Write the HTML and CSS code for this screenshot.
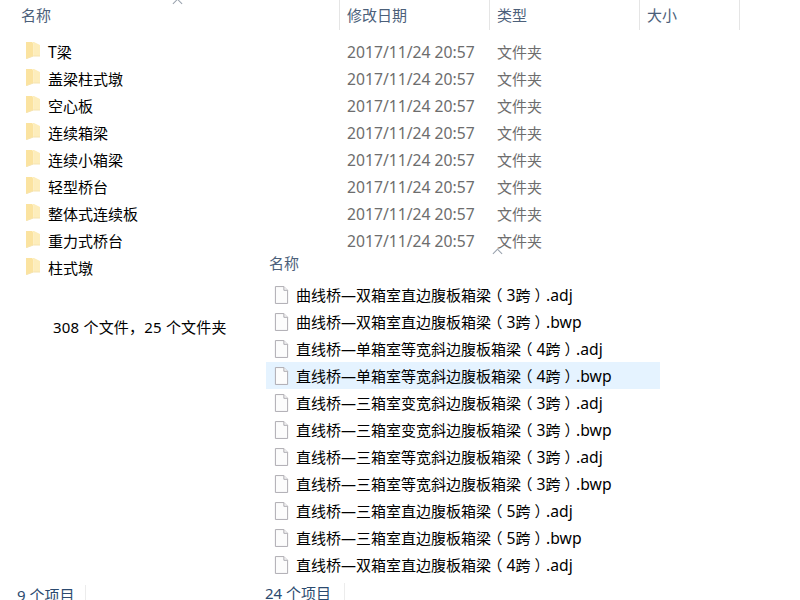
FILE: index.html
```html
<!DOCTYPE html>
<html lang="zh-CN">
<head>
    <meta charset="UTF-8">
    <title>文件夹</title>
    <link rel="stylesheet" href="styles.css">
</head>
<body>
    <svg class="defs" width="0" height="0">
        <symbol id="folder" viewBox="0 0 14 18">
            <path d="M0 0h6l1.500 2v12L0 17z" fill="#fbe3a0"/>
            <path d="M6 0h2l6 3v11H7.500V2z" fill="#fdedbb"/>
            <path d="M.5 16.500l7-2.500H14" fill="none" stroke="#f5e3b0"/>
        </symbol>
        <symbol id="file" viewBox="0 0 16 19">
            <path d="M1.500.500h9l4 4v14h-13z" fill="#fcfcfc" stroke="#aaa7ae"/>
            <path d="M10.500.500v4h4" fill="#f4f4f4" stroke="#aaa7ae"/>
        </symbol>
    </svg>

    <!-- ventana de atras -->
    <div class="window back">
        <div class="col-head">
            <span class="c-name">名称</span>
            <span class="c-date">修改日期</span>
            <span class="c-type">类型</span>
            <span class="c-size">大小</span>
        </div>
        <div class="sort-arrow back-arrow"></div>
        <ul class="folders">
            <li><svg class="ico-folder"><use href="#folder"/></svg><span class="c-label"><span class="latin">T</span>梁</span><span class="c-date">2017/11/24 20:57</span><span class="c-type">文件夹</span></li>
            <li><svg class="ico-folder"><use href="#folder"/></svg><span class="c-label">盖梁柱式墩</span><span class="c-date">2017/11/24 20:57</span><span class="c-type">文件夹</span></li>
            <li><svg class="ico-folder"><use href="#folder"/></svg><span class="c-label">空心板</span><span class="c-date">2017/11/24 20:57</span><span class="c-type">文件夹</span></li>
            <li><svg class="ico-folder"><use href="#folder"/></svg><span class="c-label">连续箱梁</span><span class="c-date">2017/11/24 20:57</span><span class="c-type">文件夹</span></li>
            <li><svg class="ico-folder"><use href="#folder"/></svg><span class="c-label">连续小箱梁</span><span class="c-date">2017/11/24 20:57</span><span class="c-type">文件夹</span></li>
            <li><svg class="ico-folder"><use href="#folder"/></svg><span class="c-label">轻型桥台</span><span class="c-date">2017/11/24 20:57</span><span class="c-type">文件夹</span></li>
            <li><svg class="ico-folder"><use href="#folder"/></svg><span class="c-label">整体式连续板</span><span class="c-date">2017/11/24 20:57</span><span class="c-type">文件夹</span></li>
            <li><svg class="ico-folder"><use href="#folder"/></svg><span class="c-label">重力式桥台</span><span class="c-date">2017/11/24 20:57</span><span class="c-type">文件夹</span></li>
            <li><svg class="ico-folder"><use href="#folder"/></svg><span class="c-label">柱式墩</span></li>
        </ul>
        <p class="summary">308 个文件，25 个文件夹</p>
        <div class="status">9 个项目</div>
    </div>

    <!-- ventana de adelante -->
    <div class="window front">
        <div class="front-head">名称</div>
        <ul class="files">
            <li><svg class="ico-file"><use href="#file"/></svg>曲线桥—双箱室直边腹板箱梁<span class="paren">（</span><span class="latin">3</span>跨<span class="paren">）</span><span class="latin">.adj</span></li>
            <li><svg class="ico-file"><use href="#file"/></svg>曲线桥—双箱室直边腹板箱梁<span class="paren">（</span><span class="latin">3</span>跨<span class="paren">）</span><span class="latin">.bwp</span></li>
            <li><svg class="ico-file"><use href="#file"/></svg>直线桥—单箱室等宽斜边腹板箱梁<span class="paren">（</span><span class="latin">4</span>跨<span class="paren">）</span><span class="latin">.adj</span></li>
            <li class="selected"><svg class="ico-file"><use href="#file"/></svg>直线桥—单箱室等宽斜边腹板箱梁<span class="paren">（</span><span class="latin">4</span>跨<span class="paren">）</span><span class="latin">.bwp</span></li>
            <li><svg class="ico-file"><use href="#file"/></svg>直线桥—三箱室变宽斜边腹板箱梁<span class="paren">（</span><span class="latin">3</span>跨<span class="paren">）</span><span class="latin">.adj</span></li>
            <li><svg class="ico-file"><use href="#file"/></svg>直线桥—三箱室变宽斜边腹板箱梁<span class="paren">（</span><span class="latin">3</span>跨<span class="paren">）</span><span class="latin">.bwp</span></li>
            <li><svg class="ico-file"><use href="#file"/></svg>直线桥—三箱室等宽斜边腹板箱梁<span class="paren">（</span><span class="latin">3</span>跨<span class="paren">）</span><span class="latin">.adj</span></li>
            <li><svg class="ico-file"><use href="#file"/></svg>直线桥—三箱室等宽斜边腹板箱梁<span class="paren">（</span><span class="latin">3</span>跨<span class="paren">）</span><span class="latin">.bwp</span></li>
            <li><svg class="ico-file"><use href="#file"/></svg>直线桥—三箱室直边腹板箱梁<span class="paren">（</span><span class="latin">5</span>跨<span class="paren">）</span><span class="latin">.adj</span></li>
            <li><svg class="ico-file"><use href="#file"/></svg>直线桥—三箱室直边腹板箱梁<span class="paren">（</span><span class="latin">5</span>跨<span class="paren">）</span><span class="latin">.bwp</span></li>
            <li><svg class="ico-file"><use href="#file"/></svg>直线桥—双箱室直边腹板箱梁<span class="paren">（</span><span class="latin">4</span>跨<span class="paren">）</span><span class="latin">.adj</span></li>
        </ul>
        <div class="status">24 个项目</div>
        <div class="sort-arrow front-arrow"></div>
    </div>
</body>
</html>
```

FILE: styles.css
```css
html, body {
    height: 100%;
}

body {
    margin: 0;
    background-color: #fff;
    color: #000;
    font-family: "Noto Sans", "Noto Sans CJK SC", sans-serif;
    font-size: 15px;
    overflow: hidden;
}

ul {
    list-style: none;
    margin: 0;
    padding: 0;
}

.defs {
    position: absolute;
}

.window {
    position: absolute;
}

.back {
    left: 0;
    top: 0;
    width: 800px;
    height: 600px;
}

.front {
    left: 266px;
    top: 250px;
    width: 394px;
    height: 350px;
}

.latin {
    font-size: 15.7px;
}

.col-head {
    display: flex;
    height: 30px;
    line-height: 30px;
    color: #4c607a;
}

.col-head span {
    box-sizing: border-box;
    height: 30px;
    padding-left: 7px;
    border-right: 1px solid #e5e5e5;
}

.col-head .c-name {
    width: 340px;
    padding-left: 21px;
    border-left: 0;
}

.col-head .c-date {
    width: 150px;
}

.col-head .c-type {
    width: 150px;
}

.col-head .c-size {
    width: 100px;
}

.sort-arrow {
    position: absolute;
    width: 6px;
    height: 6px;
    border-left: 1px solid #97a0ac;
    border-top: 1px solid #97a0ac;
    transform: rotate(45deg);
}

.back-arrow {
    left: 174px;
    top: 0;
}

.front-arrow {
    left: 228px;
    top: 0;
}

.folders {
    margin-top: 8px;
}

.folders li {
    display: flex;
    align-items: center;
    height: 27px;
    padding-left: 26px;
}

.ico-folder {
    width: 14px;
    height: 18px;
    margin-right: 8px;
    margin-top: -1px;
}

.c-label {
    width: 299px;
    white-space: nowrap;
}

.folders .c-date {
    width: 150px;
    color: #6d6d6d;
    font-size: 15.7px;
}

.folders .c-type {
    color: #6d6d6d;
}

.summary {
    margin: 36px 0 0 53px;
    line-height: 20px;
    letter-spacing: 0.2px;
}

.status {
    position: absolute;
    left: 17px;
    bottom: -5px;
    height: 20px;
    line-height: 20px;
    color: #2b4a6f;
    padding-right: 11px;
    border-right: 1px solid #ececec;
}

.front .status {
    left: -1px;
    bottom: -3px;
    padding-right: 13px;
}

.front-head {
    height: 26px;
    line-height: 26px;
    padding-left: 3px;
    color: #4c607a;
}

.files {
    margin-top: 5px;
}

.files li {
    display: flex;
    align-items: center;
    height: 27px;
    padding-left: 8px;
    white-space: nowrap;
}

.files .selected {
    background-color: #e5f3ff;
}

/* los parentesis de ancho completo van centrados en su celda */
.paren {
    font-feature-settings: "halt";
    padding: 0 4px;
}

.ico-file {
    width: 15px;
    height: 18px;
    margin-right: 7px;
    flex-shrink: 0;
}
```
